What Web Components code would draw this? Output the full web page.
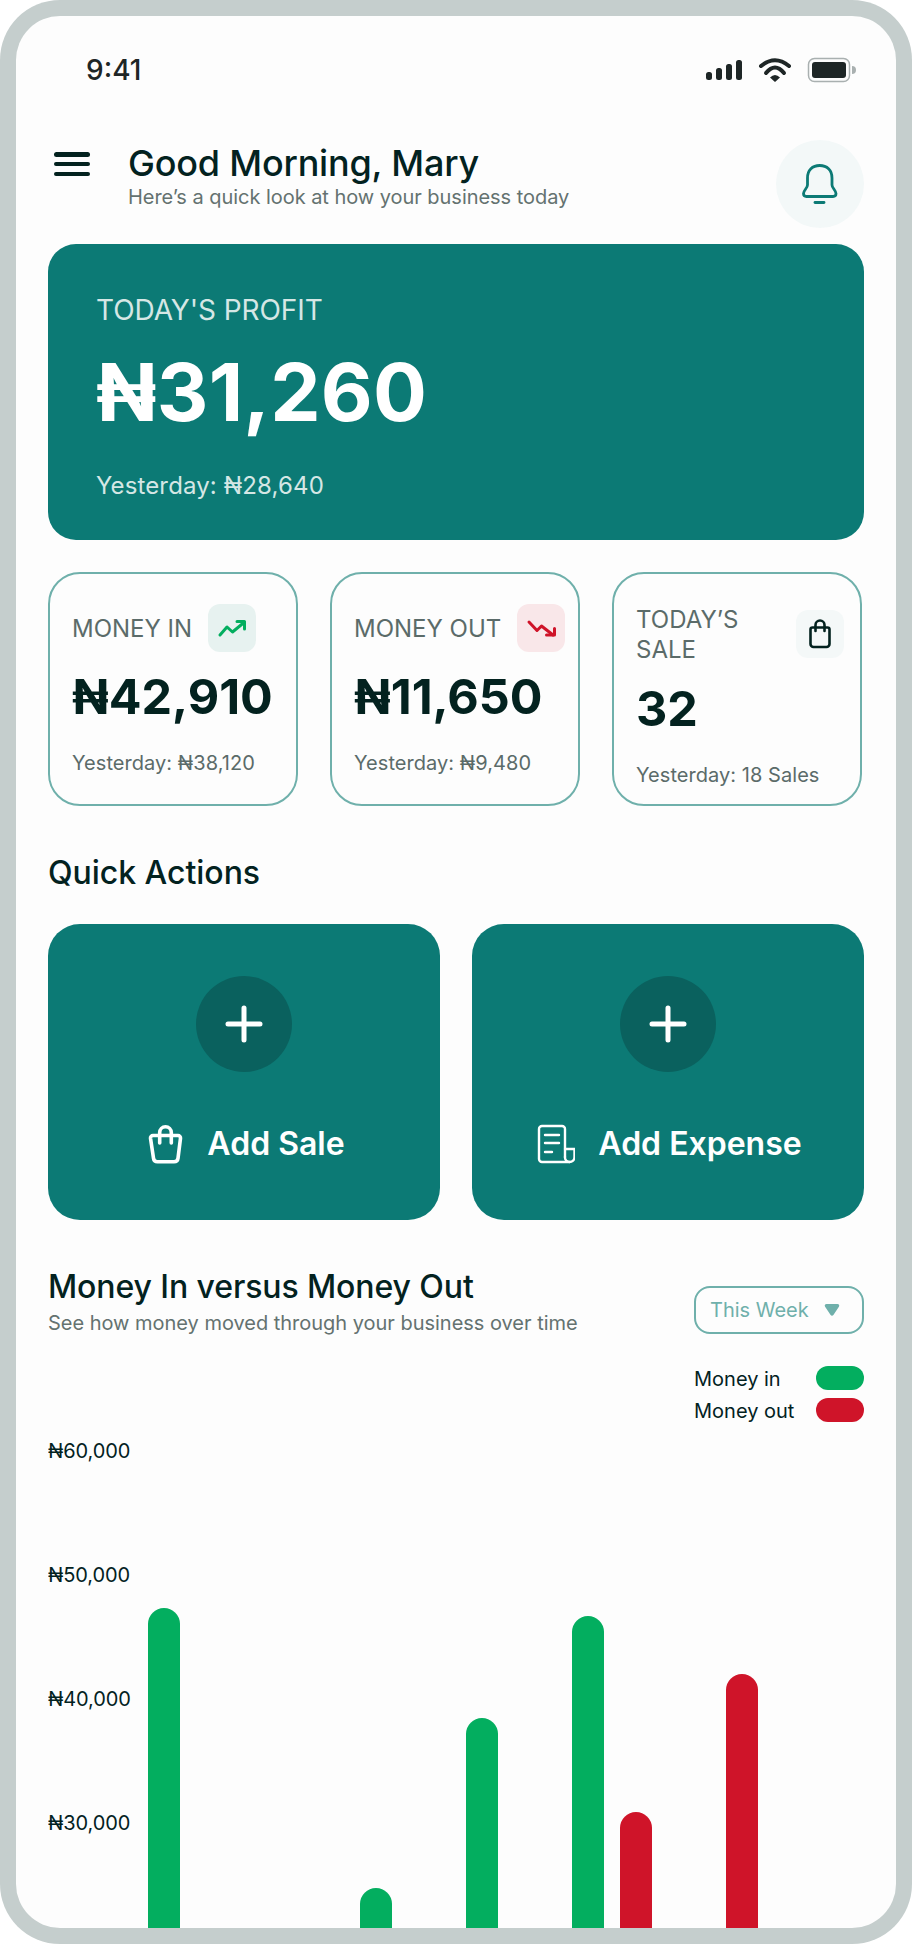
<!DOCTYPE html>
<html lang="en"><head><meta charset="utf-8"><title>Dashboard</title>
<style>
html,body{margin:0;padding:0;background:#fff}
body{font-family:Inter,"Noto Sans",sans-serif;color:#03221f}
</style></head><body>
<phone-frame>
  <status-bar></status-bar>
  <app-header title="Good Morning, Mary" sub="Here’s a quick look at how your business today"></app-header>
  <profit-card label="TODAY'S PROFIT" value="₦31,260" note="Yesterday: ₦28,640"></profit-card>
  <stat-row>
    <stat-card label="MONEY IN" value="₦42,910" note="Yesterday: ₦38,120" bg="#e7f2f0">
      <svg slot="icon" width="48" height="48" viewBox="0 0 48 48" fill="none" stroke="#03ae5f" stroke-width="3" stroke-linecap="round" stroke-linejoin="round"><path d="M12 31l7-8 5.500 5L36 18.500"/><path d="M29 17.500h7.500V25"/></svg>
    </stat-card>
    <stat-card label="MONEY OUT" value="₦11,650" note="Yesterday: ₦9,480" bg="#f9e7e9">
      <svg slot="icon" width="48" height="48" viewBox="0 0 48 48" fill="none" stroke="#cf1429" stroke-width="3" stroke-linecap="round" stroke-linejoin="round"><path d="M12 18l8 8.500 4.500-4.500L36 31"/><path d="M37.500 24.500V31H29.500"/></svg>
    </stat-card>
    <stat-card class="wrap" label="TODAY’S SALE" value="32" note="Yesterday: 18 Sales" bg="#f4f8f8">
      <svg slot="icon" width="48" height="48" viewBox="0 0 48 48" fill="none" stroke="#03221f" stroke-width="2.600" stroke-linecap="round" stroke-linejoin="round"><path d="M14.500 19.500a2 2 0 0 1 2-2h15a2 2 0 0 1 2 2V34a3 3 0 0 1-3 3H17.500a3 3 0 0 1-3-3z"/><path d="M19.500 21v-6a4.500 4.500 0 0 1 9 0v6"/></svg>
    </stat-card>
  </stat-row>
  <section-title>Quick Actions</section-title>
  <action-row>
    <action-card label="Add Sale" style="--shift:5px">
      <svg slot="icon" width="36" height="40" viewBox="0 0 36 40" fill="none" stroke="#fff" stroke-width="3.600" stroke-linecap="round" stroke-linejoin="round"><path d="M5 11.500h25a2.500 2.500 0 0 1 2.500 2.800l-2.500 20a4 4 0 0 1-4 3.500H9.500a4 4 0 0 1-4-3.500L2.500 14.300A2.500 2.500 0 0 1 5 11.500z"/><path d="M11.700 19V8.500a5.800 5.800 0 0 1 11.600 0V19"/></svg>
    </action-card>
    <action-card label="Add Expense">
      <svg slot="icon" width="38" height="40" viewBox="0 0 38 40" fill="none" stroke="#fff" stroke-width="2.400" stroke-linecap="round" stroke-linejoin="round"><path d="M28 33V5a3 3 0 0 0-3-3H5a3 3 0 0 0-3 3v30a3 3 0 0 0 3 3h27.500"/><path d="M28 25h9.500v8a5 5 0 0 1-5 5 4.500 4.500 0 0 1-4.500-5"/><path d="M8 11h14M8 19h14M8 28h7"/></svg>
    </action-card>
  </action-row>
  <chart-panel></chart-panel>
</phone-frame>
<script>
function def(name, css, html, init){
  customElements.define(name, class extends HTMLElement{
    connectedCallback(){
      if(this.shadowRoot) return;
      const r=this.attachShadow({mode:'open'});
      const a=n=>this.getAttribute(n)||'';
      r.innerHTML='<style>'+css+'</style>'+(typeof html==='function'?html(a):html);
      if(init) init(this,r);
    }
  });
}
def('phone-frame',`
 :host{display:block;width:912px;height:1944px;box-sizing:border-box;padding:16px;background:#c5cecd;border-radius:60px;font-family:Inter,"Noto Sans",sans-serif;color:#03221f}
 .screen{height:100%;background:#fdfdfd;border-radius:44px;overflow:hidden;display:flex;flex-direction:column;padding:0 32px}
`,`<div class="screen"><slot></slot></div>`);

def('status-bar',`
 :host{display:flex;align-items:center;justify-content:space-between;height:124px;padding:0 8px 16px 38px;flex:none;box-sizing:border-box}
 .t{font:500 28px/32px Inter,sans-serif;color:#1e2626;margin-top:-1px}
 .i{display:flex;align-items:center;gap:0}
 svg{display:block;overflow:visible}
`,`<span class="t">9:41</span><div class="i">
 <svg width="150" height="24" viewBox="0 0 150 24" fill="#1e2626"><rect x="0" y="14" width="6" height="8" rx="2.500"/><rect x="10" y="10" width="6" height="12" rx="2.500"/><rect x="20" y="6" width="6" height="16" rx="2.500"/><rect x="30" y="2" width="6" height="20" rx="2.500"/>
 <path d="M55 8Q69-3.500 83 8" fill="none" stroke="#1e2626" stroke-width="4" stroke-linecap="round"/><path d="M60 15Q69 4 78 15" fill="none" stroke="#1e2626" stroke-width="4" stroke-linecap="round"/><path d="M64 19.500Q69 14.500 74 19.500L69 24z"/>
 <rect x="102.500" y=".5" width="41" height="23" rx="6" fill="none" stroke="#a9b0b0" stroke-width="1.500"/><rect x="106" y="4" width="34" height="16" rx="3"/><path d="M146 8a4 4 0 0 1 0 8z" fill="#a9b0b0"/></svg></div>`);

def('app-header',`
 :host{display:flex;align-items:flex-start;flex:none;height:88px}
 .m{width:36px;margin:10px 0 0 6px;flex:none;display:flex;flex-direction:column;justify-content:space-between;padding-top:2px;box-sizing:border-box;height:26px}
 .m i{display:block;height:4.500px;border-radius:3px;background:#03221f}
 .x{flex:1;margin:1px 0 0 38px;min-width:0}
 h1{margin:0;font:500 36px/44px Inter,sans-serif;color:#03221f;letter-spacing:-.2px}
 p{margin:0;font:400 20px/24px Inter,sans-serif;color:#647270;letter-spacing:-.04px}
 .b{width:88px;height:88px;border-radius:50%;background:#f3f8f8;display:flex;align-items:center;justify-content:center;flex:none}
 svg{display:block}
`,a=>`<div class="m"><i></i><i></i><i></i></div><div class="x"><h1>${a('title')}</h1><p>${a('sub')}</p></div>
 <div class="b"><svg width="40" height="44" viewBox="0 0 40 44" fill="none" stroke="#0c7a75" stroke-width="2.800" stroke-linejoin="round" stroke-linecap="round"><path d="M7.500 16C7.500 8 12.500 3.500 19.700 3.500S32 8 32 16V23c0 3 4 5.500 4 8.500 0 2-1 3-3 3H6.500c-2 0-3-1-3-3 0-3 4-5.500 4-8.500z"/><path d="M15 40.500h9"/></svg></div>`);

def('profit-card',`
 :host{display:block;flex:none;margin-top:16px;height:296px;box-sizing:border-box;background:#0c7a75;border-radius:28px;padding:48px;color:#fff}
 .l{font:400 28px/36px Inter,sans-serif;color:#d5e7e5;letter-spacing:-.08px}
 .v{font:700 80px/96px Inter,sans-serif;margin-top:16px;color:#fff;letter-spacing:.2px}
 .n{font:400 24px/32px Inter,sans-serif;color:#d5e7e5;margin-top:30px;letter-spacing:.13px}
`,a=>`<div class="l">${a('label')}</div><div class="v">${a('value')}</div><div class="n">${a('note')}</div>`);

def('stat-row',`:host{display:flex;gap:32px;flex:none;margin-top:32px;align-items:stretch}`,`<slot></slot>`);

def('stat-card',`
 :host{display:block;width:250px;flex:none;box-sizing:border-box;border:2px solid #6fb0ab;border-radius:32px;padding:30px 0 17px 22px;background:#fdfdfd}
 .top{display:flex;align-items:center;gap:16px}
 .l{font:400 24px/30px Inter,sans-serif;color:#5b6b69;white-space:nowrap;padding-top:2px}
 :host(.wrap) .top{gap:0;align-items:flex-start}
 :host(.wrap) .l{white-space:normal;width:160px;flex:none;padding-top:1px}
 :host(.wrap) .ic{margin-top:6px}
 :host(.wrap) .v{margin-top:15px}
 .ic{width:48px;height:48px;border-radius:12px;flex:none;background:var(--bg)}
 .v{font:700 48.500px/58px Inter,sans-serif;margin-top:16px;color:#03221f}
 .n{font:400 20px/24px Inter,sans-serif;color:#5b6b69;margin-top:25px;white-space:nowrap;letter-spacing:.05px}
 ::slotted(svg){display:block}
`,a=>`<div class="top"><div class="l">${a('label')}</div><div class="ic" style="--bg:${a('bg')}"><slot name="icon"></slot></div></div><div class="v">${a('value')}</div><div class="n">${a('note')}</div>`);

def('section-title',`:host{display:block;flex:none;font:500 32px/40px Inter,sans-serif;color:#03221f;margin-top:47px;letter-spacing:-.03px}`,`<slot></slot>`);

def('action-row',`:host{display:flex;gap:32px;flex:none;margin-top:31px}`,`<slot></slot>`);

def('action-card',`
 :host{display:flex;flex-direction:column;align-items:center;flex:1;height:296px;box-sizing:border-box;background:#0c7a75;border-radius:32px;padding-top:52px;color:#fff}
 .c{width:96px;height:96px;border-radius:50%;background:#0a615e;display:flex;align-items:center;justify-content:center}
 .r{display:flex;align-items:center;gap:23px;margin-top:52px;height:40px;margin-left:var(--shift,3px)}
 .t{font:600 32px/40px Inter,sans-serif;color:#fff}
 svg,::slotted(svg){display:block}
`,a=>`<div class="c"><svg width="40" height="40" viewBox="0 0 40 40" fill="none" stroke="#fff" stroke-width="5" stroke-linecap="round"><path d="M20 4v32M4 20h32"/></svg></div><div class="r"><slot name="icon"></slot><span class="t">${a('label')}</span></div>`);

def('week-pill',`
 :host{display:flex;align-items:center;gap:15px;box-sizing:border-box;width:170px;height:48px;border:2px solid #6fb0ab;border-radius:16px;padding-left:14px;font:400 20px/24px Inter,sans-serif;color:#6fb0ab}
 svg{display:block}
`,`<slot></slot><svg width="16" height="14" viewBox="0 0 16 14" fill="#6fb0ab"><path d="M2.500 1h11c1.500 0 2.300 1.500 1.400 2.700L9.400 12c-.7 1-2.100 1-2.800 0L1.100 3.700C.2 2.500 1 1 2.500 1z"/></svg>`);

def('chart-legend',`
 :host{display:grid;grid-template-columns:122px 48px;row-gap:8px;align-items:center;width:170px;font:400 20px/24px Inter,sans-serif;color:#03221f;margin:32px 0 0 auto;flex:none}
 i{display:block;height:24px;border-radius:12px;transform:translateY(-1px)}
`,a=>`<span>Money in</span><i style="background:#03ae5f"></i><span>Money out</span><i style="background:#cf1429"></i>`);

def('chart-bars',`
 :host{display:flex;flex:1;min-height:0;gap:0;margin-top:16px;overflow:hidden}
 .y{width:100px;flex:none;display:flex;flex-direction:column;gap:100px;font:400 20px/24px Inter,sans-serif;color:#03221f;letter-spacing:-.1px}
 .p{flex:1;display:flex;gap:26px;align-items:flex-end}
 .g{display:flex;gap:16px;align-items:flex-end;flex:none}
 .g i{display:block;width:32px;border-radius:16px 16px 0 0}
 .a{background:#03ae5f}.b{background:#cf1429}
`,a=>{
 const d=[[320,0],[0,0],[40,0],[210,0],[312,116],[0,254]];
 return `<div class="y"><span>₦60,000</span><span>₦50,000</span><span>₦40,000</span><span>₦30,000</span></div><div class="p">`+
 d.map(([x,y])=>`<div class="g"><i class="a" style="height:${x}px"></i><i class="b" style="height:${y}px"></i></div>`).join('')+`</div>`;
});

def('chart-panel',`
 :host{display:flex;flex-direction:column;flex:1;min-height:0}
 .h{display:flex;justify-content:space-between;align-items:flex-start;margin-top:47px;flex:none}
 h2{margin:0;font:500 32px/40px Inter,sans-serif;color:#03221f;letter-spacing:-.1px}
 p{margin:4px 0 0;font:400 20px/24px Inter,sans-serif;color:#647270;letter-spacing:-.02px}
`,`<div class="h"><div><h2>Money In versus Money Out</h2><p>See how money moved through your business over time</p></div><week-pill style="margin-top:19px">This Week</week-pill></div><chart-legend></chart-legend><chart-bars></chart-bars>`);
</script>
</body></html>
